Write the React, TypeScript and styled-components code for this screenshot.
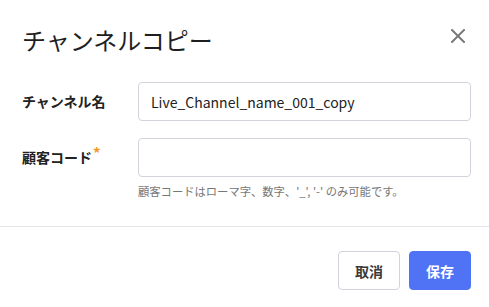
import React from "react";
import styled, { createGlobalStyle } from "styled-components";

const Global = createGlobalStyle`
  html, body { margin: 0; padding: 0; background: #fff; }
  body { font-family: "Noto Sans CJK JP", "Noto Sans", sans-serif; color: #222; }
  * { box-sizing: border-box; }
`;

const Modal = styled.div`
  width: 489px;
  height: 307px;
  background: #fff;
  display: flex;
  flex-direction: column;
`;

const Header = styled.div`
  display: flex;
  justify-content: space-between;
  align-items: flex-start;
  padding: 24px 24px 0 22px;
`;

const Title = styled.h1`
  margin: 0;
  font-size: 24px;
  line-height: 32px;
  font-weight: 400;
  color: #1e1e1e;
`;

const CloseButton = styled.button`
  border: 0;
  background: none;
  padding: 0;
  margin-top: 5px;
  width: 14px;
  height: 14px;
  display: flex;
  cursor: pointer;
`;

const Body = styled.div`
  padding: 26px 18px 0 22px;
  display: flex;
  flex-direction: column;
  gap: 17px;
`;

const Row = styled.div`
  display: grid;
  grid-template-columns: 116px 1fr;
  align-items: start;
`;

const Label = styled.label`
  font-size: 14px;
  font-weight: 700;
  line-height: 39px;
  color: #222;
`;

const Required = styled.span`
  color: #f59a23;
  font-size: 15px;
  font-weight: 700;
  vertical-align: top;
  position: relative;
  top: -5px;
  margin-left: 1px;
`;

const Field = styled.div`
  display: flex;
  flex-direction: column;
`;

const Input = styled.input`
  width: 100%;
  height: 39px;
  border: 1px solid #d3d3de;
  border-radius: 4px;
  padding: 0 12px;
  font-family: "Noto Sans CJK JP", sans-serif;
  font-size: 14px;
  color: #222;
  outline: none;
`;

const Help = styled.div`
  margin-top: 6px;
  font-size: 11.3px;
  line-height: 16px;
  color: #777;
`;

const Footer = styled.div`
  margin-top: 27px;
  border-top: 1px solid #e6e6ea;
  padding: 24px 18px 0 22px;
  display: flex;
  justify-content: flex-end;
  gap: 9px;
`;

const Button = styled.button<{ $primary?: boolean }>`
  height: 39px;
  padding: 0 16px;
  border-radius: 4px;
  font-family: "Noto Sans CJK JP", sans-serif;
  font-size: 14px;
  font-weight: 700;
  cursor: pointer;
  border: 1px solid ${(p) => (p.$primary ? "#5072f5" : "#d3d3de")};
  background: ${(p) => (p.$primary ? "#5072f5" : "#fff")};
  color: ${(p) => (p.$primary ? "#fff" : "#3a3a3a")};
`;

export default function App() {
  return (
    <>
      <Global />
      <Modal>
        <Header>
          <Title>チャンネルコピー</Title>
          <CloseButton aria-label="close">
            <svg width="14" height="14" viewBox="0 0 14 14">
              <path d="M1 1 L13 13 M13 1 L1 13" stroke="#7a7a7a" strokeWidth="2" strokeLinecap="square" />
            </svg>
          </CloseButton>
        </Header>
        <Body>
          <Row>
            <Label>チャンネル名</Label>
            <Field>
              <Input defaultValue="Live_Channel_name_001_copy" />
            </Field>
          </Row>
          <Row>
            <Label>
              顧客コード<Required>*</Required>
            </Label>
            <Field>
              <Input />
              <Help>顧客コードはローマ字、数字、'_', '-' のみ可能です。</Help>
            </Field>
          </Row>
        </Body>
        <Footer>
          <Button>取消</Button>
          <Button $primary>保存</Button>
        </Footer>
      </Modal>
    </>
  );
}
